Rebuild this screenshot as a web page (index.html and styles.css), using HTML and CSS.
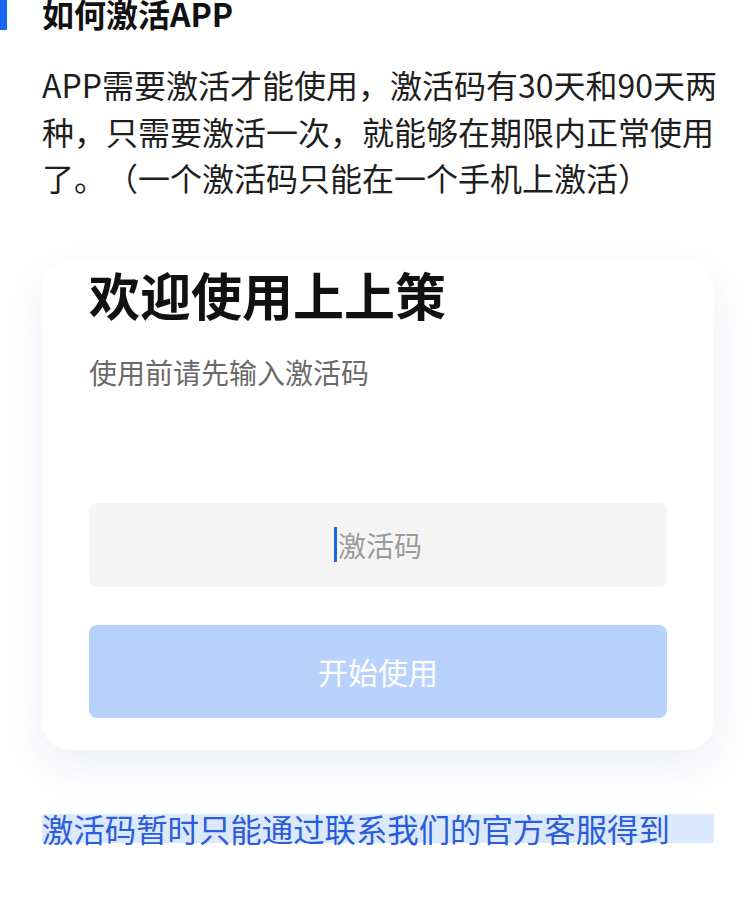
FILE: index.html
```html
<!DOCTYPE html>
<html lang="zh-CN">
<head>
<meta charset="utf-8">
<title>如何激活APP</title>
<link rel="stylesheet" href="styles.css">
</head>
<body>
<div class="page">
  <div class="section-head">
    <span class="bar"></span>
    <h2 class="section-title">如何激活APP</h2>
  </div>
  <p class="desc">APP需要激活才能使用，激活码有30天和90天两种，只需要激活一次，就能够在期限内正常使用了。（一个激活码只能在一个手机上激活）</p>

  <div class="card">
    <h1 class="card-title">欢迎使用上上策</h1>
    <p class="card-sub">使用前请先输入激活码</p>
    <div class="code-input"><span class="caret"></span><span class="placeholder">激活码</span></div>
    <div class="start-btn">开始使用</div>
  </div>

  <div class="note"><span class="note-text">激活码暂时只能通过联系我们的官方客服得到</span></div>
</div>
</body>
</html>
```

FILE: styles.css
```css
* { box-sizing: border-box; }
html, body {
  margin: 0;
  padding: 0;
  background: #ffffff;
}
body {
  font-family: "Noto Sans CJK SC", "Noto Sans", sans-serif;
  color: #1c1c1c;
  text-spacing-trim: space-all;
}
.page {
  width: 756px;
  overflow: hidden;
  padding-bottom: 40px;
}
.section-head {
  display: flex;
  align-items: flex-start;
  gap: 35px;
  height: 32px;
}
.bar {
  width: 7px;
  height: 30px;
  background: #1866f2;
  flex: none;
}
.section-title {
  margin: -3px 0 0 0;
  font-size: 32px;
  line-height: 32px;
  font-weight: 700;
  color: #111;
  white-space: nowrap;
}
.desc {
  margin: 29px 0 0 0;
  padding: 0 36px 0 42px;
  font-size: 32px;
  line-height: 46.5px;
  color: #1e1e1e;
}
.card {
  margin: 60px 42px 0 42px;
  padding: 3px 47px 32px 47px;
  background: #fff;
  border-radius: 28px;
  box-shadow: 0 16px 42px rgba(60, 80, 150, 0.09);
}
.card-title {
  margin: 0;
  font-size: 51px;
  line-height: 60px;
  font-weight: 700;
  color: #111;
}
.card-sub {
  margin: 28px 0 0 0;
  font-size: 28px;
  line-height: 40px;
  color: #6a6a6a;
}
.code-input {
  margin-top: 111px;
  height: 84px;
  background: #f5f5f5;
  border-radius: 8px;
  display: flex;
  align-items: center;
  justify-content: center;
}
.caret {
  width: 3px;
  height: 35px;
  background: #1b66e6;
  margin-right: 1px;
}
.placeholder {
  font-size: 28px;
  line-height: 40px;
  color: #9b9b9b;
}
.start-btn {
  margin-top: 38px;
  height: 93px;
  border-radius: 8px;
  background: #b9d2fb;
  color: #fff;
  font-size: 30px;
  display: flex;
  align-items: center;
  justify-content: center;
}
.note {
  margin: 64px 42px 0 42px;
  height: 29px;
  background: #dce8fc;
  display: flex;
  align-items: center;
}
.note-text {
  font-size: 31.4px;
  line-height: 29px;
  color: #2a5cdb;
  white-space: nowrap;
}
```
